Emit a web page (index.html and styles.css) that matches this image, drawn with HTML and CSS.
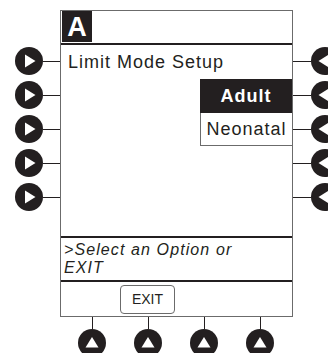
FILE: index.html
```html
<!DOCTYPE html>
<html lang="en">
<head>
    <meta charset="UTF-8">
    <meta name="viewport" content="width=device-width, initial-scale=1.0">
    <title>Limit Mode Setup</title>
    <link rel="stylesheet" href="styles.css">
</head>
<body>
    <div class="device">
        <!-- soft keys on the left -->
        <div class="keys keys-left">
            <div class="key"><svg width="28" height="28" viewBox="0 0 28 28"><circle cx="14" cy="14" r="14"/><polygon points="10,7.5 10,20.5 20.5,14"/></svg><span class="wire"></span></div>
            <div class="key"><svg width="28" height="28" viewBox="0 0 28 28"><circle cx="14" cy="14" r="14"/><polygon points="10,7.5 10,20.5 20.5,14"/></svg><span class="wire"></span></div>
            <div class="key"><svg width="28" height="28" viewBox="0 0 28 28"><circle cx="14" cy="14" r="14"/><polygon points="10,7.5 10,20.5 20.5,14"/></svg><span class="wire"></span></div>
            <div class="key"><svg width="28" height="28" viewBox="0 0 28 28"><circle cx="14" cy="14" r="14"/><polygon points="10,7.5 10,20.5 20.5,14"/></svg><span class="wire"></span></div>
            <div class="key"><svg width="28" height="28" viewBox="0 0 28 28"><circle cx="14" cy="14" r="14"/><polygon points="10,7.5 10,20.5 20.5,14"/></svg><span class="wire"></span></div>
        </div>

        <div class="screen">
            <div class="screen-head">
                <span class="channel">A</span>
            </div>
            <div class="screen-main">
                <div class="title">Limit Mode Setup</div>
                <div class="option selected">Adult</div>
                <div class="option">Neonatal</div>
            </div>
            <div class="prompt">
                <div>&gt;Select an Option or</div>
                <div>EXIT</div>
            </div>
            <div class="screen-bar">
                <span class="bar-btn">EXIT</span>
            </div>
        </div>

        <!-- soft keys on the right -->
        <div class="keys keys-right">
            <div class="key"><span class="wire"></span><svg width="28" height="28" viewBox="0 0 28 28"><circle cx="14" cy="14" r="14"/><polygon points="18,7.5 18,20.5 7.5,14"/></svg></div>
            <div class="key"><span class="wire"></span><svg width="28" height="28" viewBox="0 0 28 28"><circle cx="14" cy="14" r="14"/><polygon points="18,7.5 18,20.5 7.5,14"/></svg></div>
            <div class="key"><span class="wire"></span><svg width="28" height="28" viewBox="0 0 28 28"><circle cx="14" cy="14" r="14"/><polygon points="18,7.5 18,20.5 7.5,14"/></svg></div>
            <div class="key"><span class="wire"></span><svg width="28" height="28" viewBox="0 0 28 28"><circle cx="14" cy="14" r="14"/><polygon points="18,7.5 18,20.5 7.5,14"/></svg></div>
            <div class="key"><span class="wire"></span><svg width="28" height="28" viewBox="0 0 28 28"><circle cx="14" cy="14" r="14"/><polygon points="18,7.5 18,20.5 7.5,14"/></svg></div>
        </div>

        <!-- soft keys below -->
        <div class="keys-bottom">
            <div class="key-up"><span class="stem"></span><svg width="28" height="28" viewBox="0 0 28 28"><circle cx="14" cy="14" r="14"/><polygon points="7.5,18.5 20.5,18.5 14,8"/></svg></div>
            <div class="key-up"><span class="stem"></span><svg width="28" height="28" viewBox="0 0 28 28"><circle cx="14" cy="14" r="14"/><polygon points="7.5,18.5 20.5,18.5 14,8"/></svg></div>
            <div class="key-up"><span class="stem"></span><svg width="28" height="28" viewBox="0 0 28 28"><circle cx="14" cy="14" r="14"/><polygon points="7.5,18.5 20.5,18.5 14,8"/></svg></div>
            <div class="key-up"><span class="stem"></span><svg width="28" height="28" viewBox="0 0 28 28"><circle cx="14" cy="14" r="14"/><polygon points="7.5,18.5 20.5,18.5 14,8"/></svg></div>
        </div>
    </div>
</body>
</html>
```

FILE: styles.css
```css
html, body {
    margin: 0;
    background-color: #fff;
}
body {
    width: 328px;
    height: 353px;
    overflow: hidden;
    font-family: "Liberation Sans", Arial, sans-serif;
    color: #231f20;
}
.device {
    display: grid;
    grid-template-columns: 60px 233px 35px;
    padding-top: 10px;
}
.keys {
    display: flex;
    flex-direction: column;
    gap: 6px;
    padding-top: 37px;
}
.key {
    display: flex;
    align-items: center;
    height: 28px;
}
.keys-left .key {
    padding-left: 15px;
}
.key svg, .key-up svg {
    flex: none;
    fill: #231f20;
}
.key svg polygon, .key-up svg polygon {
    fill: #fff;
}
.wire {
    flex: 1;
    height: 1px;
    background-color: #231f20;
}
.keys-right .wire {
    flex: none;
    width: 18px;
}
.screen {
    border: 1px solid #6b6b6b;
    height: 305px;
    display: flex;
    flex-direction: column;
}
.screen-head {
    height: 32px;
    border-bottom: 2px solid #231f20;
}
.channel {
    display: block;
    width: 30px;
    height: 31px;
    margin: 0 0 0 1px;
    background-color: #231f20;
    color: #fff;
    font-weight: bold;
    font-size: 27px;
    line-height: 32px;
    text-align: center;
}
.screen-main {
    height: 191px;
    display: flex;
    flex-direction: column;
}
.title {
    height: 34px;
    line-height: 34px;
    padding-left: 7px;
    font-size: 18px;
    letter-spacing: 1px;
}
.option {
    align-self: flex-end;
    width: 92px;
    height: 34px;
    line-height: 34px;
    box-sizing: border-box;
    text-align: center;
    font-size: 18px;
    letter-spacing: 1px;
}
.option.selected {
    background-color: #231f20;
    color: #fff;
    font-weight: bold;
}
.option:not(.selected) {
    height: 33px;
    line-height: 32px;
    border-left: 1px solid #6b6b6b;
    border-bottom: 1px solid #6b6b6b;
}
.prompt {
    height: 36px;
    padding: 3px 0 3px 3px;
    border-top: 2px solid #231f20;
    border-bottom: 2px solid #231f20;
    font-size: 16px;
    letter-spacing: 1.1px;
    font-style: italic;
    line-height: 18px;
}
.screen-bar {
    flex: 1;
    padding: 3px 0 0 59px;
}
.bar-btn {
    display: block;
    width: 53px;
    height: 27px;
    line-height: 27px;
    border: 1px solid #6b6b6b;
    border-radius: 4px;
    text-align: center;
    font-size: 14px;
}
.keys-bottom {
    grid-column: 1 / -1;
    display: flex;
    gap: 28px;
    padding-left: 78px;
}
.key-up {
    display: flex;
    flex-direction: column;
    align-items: center;
}
.stem {
    width: 1px;
    height: 12px;
    background-color: #231f20;
}
```
